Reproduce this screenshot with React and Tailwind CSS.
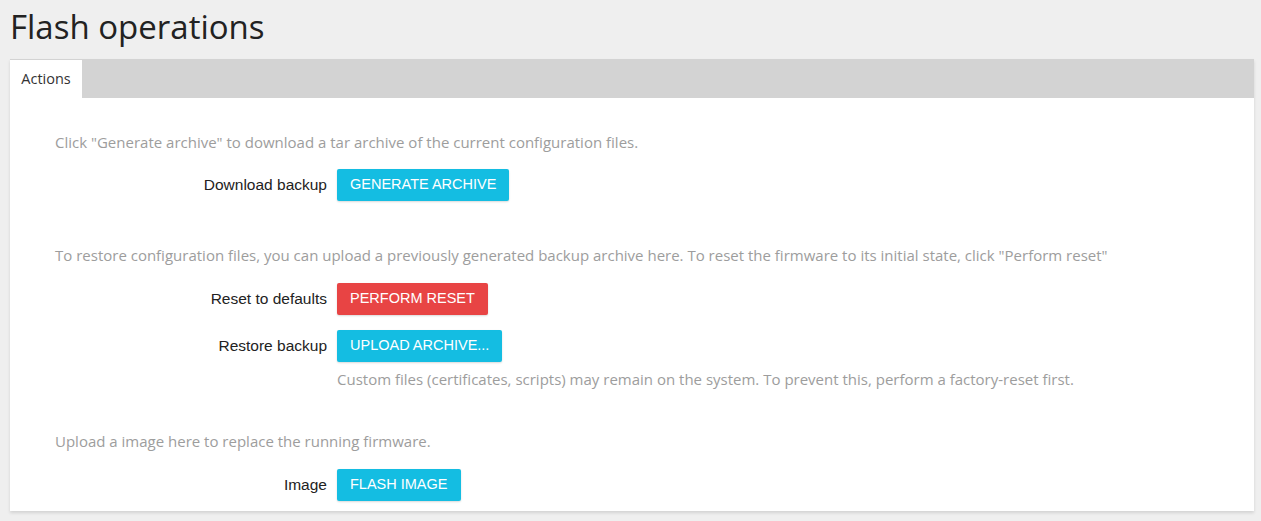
import React from 'react'

function Row({ label, children }) {
  return (
    <div className="flex items-center">
      <div className="w-[282px] pr-[10px] text-right text-[15.5px] text-[#222] font-['Liberation_Sans',Arial,sans-serif]">
        {label}
      </div>
      {children}
    </div>
  )
}

function Btn({ color, children }) {
  return (
    <button
      className={`h-[32px] px-[13px] rounded-[2px] text-white text-[14.5px] uppercase font-['Liberation_Sans',Arial,sans-serif] shadow-[0_1px_2px_rgba(0,0,0,0.15)] ${color}`}
    >
      {children}
    </button>
  )
}

export default function App() {
  return (
    <div className="w-[1261px] h-[521px] bg-[#efefef] px-[10px] pt-[5px] overflow-hidden font-['Open_Sans','Noto_Sans',sans-serif]">
      <h1 className="text-[33px] leading-[44px] text-[#222] font-normal">Flash operations</h1>
      <div className="mt-[10px] w-[1244px] shadow-[0_2px_3px_rgba(0,0,0,0.12)]">
        <div className="flex h-[39px] bg-[#d3d3d3]">
          <div className="w-[72px] bg-white flex items-center justify-center text-[14.5px] text-[#333] mt-[1px]">Actions</div>
        </div>
        <div className="bg-white pl-[45px] pt-[34px] pb-[10px]">
          <p className="text-[15px] text-[#9d9d9d] leading-[20px]">
            Click "Generate archive" to download a tar archive of the current configuration files.
          </p>
          <div className="mt-[17px]">
            <Row label="Download backup">
              <Btn color="bg-[#14bde2]">Generate archive</Btn>
            </Row>
          </div>
          <p className="mt-[44px] text-[15px] text-[#9d9d9d] leading-[20px]">
            To restore configuration files, you can upload a previously generated backup archive here. To reset the firmware to its initial state, click "Perform reset"
          </p>
          <div className="mt-[18px] flex flex-col gap-[15px]">
            <Row label="Reset to defaults">
              <Btn color="bg-[#e84444]">Perform reset</Btn>
            </Row>
            <Row label="Restore backup">
              <Btn color="bg-[#14bde2]">Upload archive...</Btn>
            </Row>
          </div>
          <p className="ml-[282px] mt-[7px] text-[15px] text-[#9d9d9d] leading-[20px]">
            Custom files (certificates, scripts) may remain on the system. To prevent this, perform a factory-reset first.
          </p>
          <p className="mt-[42px] text-[15px] text-[#9d9d9d] leading-[20px]">
            Upload a image here to replace the running firmware.
          </p>
          <div className="mt-[18px]">
            <Row label="Image">
              <Btn color="bg-[#14bde2]">Flash image</Btn>
            </Row>
          </div>
        </div>
      </div>
    </div>
  )
}
